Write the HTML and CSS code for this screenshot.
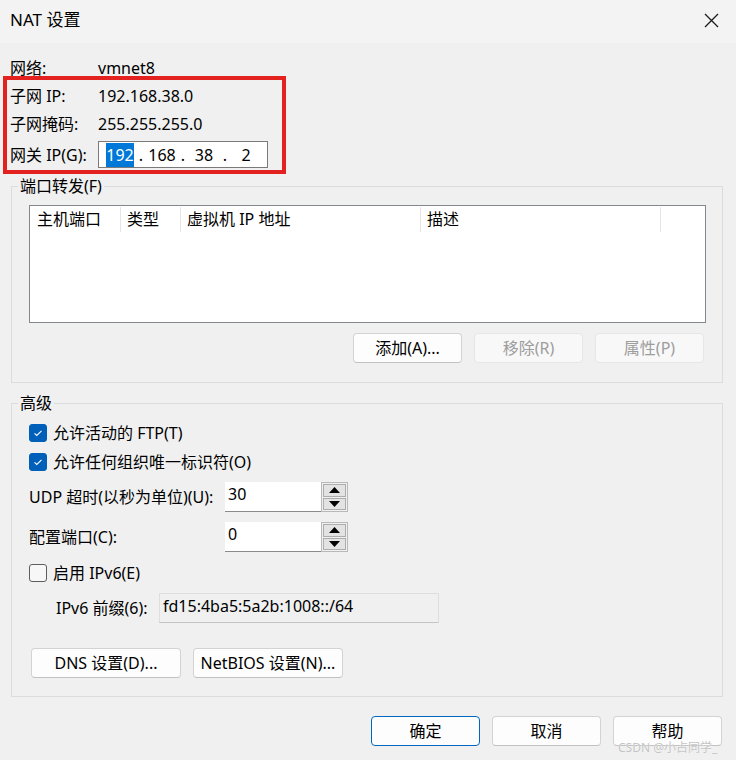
FILE: index.html
```html
<!DOCTYPE html>
<html lang="zh-CN">
<head>
<meta charset="utf-8">
<title>NAT 设置</title>
<link rel="stylesheet" href="styles.css">
</head>
<body>
<header class="titlebar">
  <span class="title">NAT 设置</span>
  <span class="close"><svg width="15" height="15" viewBox="0 0 15 15"><path d="M1 1 L14 14 M14 1 L1 14" stroke="#1b1b1b" stroke-width="1.3" fill="none"/></svg></span>
</header>

<div class="info">
  <div class="info-row"><span class="lbl">网络:</span><span>vmnet8</span></div>
  <div class="info-row"><span class="lbl">子网 IP:</span><span>192.168.38.0</span></div>
  <div class="info-row"><span class="lbl">子网掩码:</span><span>255.255.255.0</span></div>
  <div class="info-row gw"><span class="lbl">网关 IP(G):</span>
    <div class="ipbox">
      <span class="oct"><span class="sel">192</span></span><span class="dot">.</span>
      <span class="oct">168</span><span class="dot">.</span>
      <span class="oct">38</span><span class="dot">.</span>
      <span class="oct">2</span>
    </div>
  </div>
</div>

<fieldset class="group pf">
  <legend>端口转发(F)</legend>
  <div class="group-body">
    <div class="list">
      <div class="list-head">
        <div class="col c1">主机端口</div>
        <div class="col c2">类型</div>
        <div class="col c3">虚拟机 IP 地址</div>
        <div class="col c4">描述</div>
      </div>
    </div>
    <div class="btn-row">
      <div class="btn">添加(A)...</div>
      <div class="btn disabled">移除(R)</div>
      <div class="btn disabled">属性(P)</div>
    </div>
  </div>
</fieldset>

<fieldset class="group adv">
  <legend>高级</legend>
  <div class="group-body">
    <div class="chk-row first">
      <span class="cb checked"><svg width="18" height="18" viewBox="0 0 18 18"><path d="M5.5 9.3 L7.8 11.5 L12.5 6.8" stroke="#fff" stroke-width="1.1" fill="none"/></svg></span>
      <span>允许活动的 FTP(T)</span>
    </div>
    <div class="chk-row">
      <span class="cb checked"><svg width="18" height="18" viewBox="0 0 18 18"><path d="M5.5 9.3 L7.8 11.5 L12.5 6.8" stroke="#fff" stroke-width="1.1" fill="none"/></svg></span>
      <span>允许任何组织唯一标识符(O)</span>
    </div>
    <div class="spin-row">
      <span class="slbl">UDP 超时(以秒为单位)(U):</span>
      <div class="num">30</div>
      <div class="spinner">
        <div class="sbtn"><svg width="11" height="6" viewBox="0 0 11 6"><path d="M0 6 L5.5 0 L11 6 Z" fill="#000"/></svg></div>
        <div class="sbtn"><svg width="11" height="6" viewBox="0 0 11 6"><path d="M0 0 L11 0 L5.5 6 Z" fill="#000"/></svg></div>
      </div>
    </div>
    <div class="spin-row second">
      <span class="slbl">配置端口(C):</span>
      <div class="num">0</div>
      <div class="spinner">
        <div class="sbtn"><svg width="11" height="6" viewBox="0 0 11 6"><path d="M0 6 L5.5 0 L11 6 Z" fill="#000"/></svg></div>
        <div class="sbtn"><svg width="11" height="6" viewBox="0 0 11 6"><path d="M0 0 L11 0 L5.5 6 Z" fill="#000"/></svg></div>
      </div>
    </div>
    <div class="chk-row v6">
      <span class="cb"></span>
      <span>启用 IPv6(E)</span>
    </div>
    <div class="prefix-row">
      <span class="plbl">IPv6 前缀(6):</span>
      <div class="prefix">fd15:4ba5:5a2b:1008::/64</div>
    </div>
    <div class="dns-row">
      <div class="btn wide">DNS 设置(D)...</div>
      <div class="btn wide">NetBIOS 设置(N)...</div>
    </div>
  </div>
</fieldset>

<footer class="footer">
  <div class="btn primary">确定</div>
  <div class="btn">取消</div>
  <div class="btn">帮助</div>
</footer>

<div class="annot"></div>
<div class="watermark">CSDN @小占同学_</div>
</body>
</html>
```

FILE: styles.css
```css
* { box-sizing: border-box; }
html, body { margin: 0; padding: 0; }
body {
  width: 736px;
  height: 760px;
  overflow: hidden;
  position: relative;
  background: #f0f0f0;
  color: #000;
  font-family: "Noto Sans", "Noto Sans CJK SC", sans-serif;
  font-size: 16px;
  line-height: 20px;
}

.titlebar {
  height: 43px;
  background: #f3f3f3;
  display: flex;
  align-items: center;
  justify-content: space-between;
  padding: 0 17px 3px 10px;
}
.title { font-size: 17px; }
.close svg { display: block; }

.info { padding: 11px 0 0 10px; }
.info-row { display: flex; align-items: center; height: 28px; }
.lbl { width: 88px; }
.info-row.gw { height: 27px; margin-top: 3px; }
.ipbox {
  width: 170px;
  height: 27px;
  background: #fff;
  border: 1px solid #7a7a7a;
  display: flex;
  align-items: center;
  padding-left: 4px;
}
.oct { width: 34px; text-align: center; }
.dot { width: 8px; text-align: center; }
.sel { background: #0078d7; color: #fff; padding: 1px 0; }

.group {
  margin: 8px 13px 0 11px;
  padding: 9px 16px 19px 6px;
  border: 1px solid #dcdcdc;
  min-width: 0;
}
.group legend {
  padding: 0 2px;
  line-height: 20px;
  font-size: 16px;
}
.group.adv { margin-top: 10px; padding-top: 5px; padding-bottom: 18px; }
.group-body { padding-left: 11px; }

.list {
  height: 118px;
  background: #fff;
  border: 1px solid #828790;
}
.list-head { display: flex; padding-top: 1px; }
.col {
  height: 25px;
  line-height: 25px;
  border-right: 1px solid #e5e5e5;
  padding-left: 6px;
  white-space: nowrap;
}
.c1 { width: 91px; padding-left: 7px; }
.c2 { width: 60px; }
.c3 { width: 240px; }
.c4 { width: 240px; }

.btn-row {
  display: flex;
  justify-content: flex-end;
  gap: 12px;
  margin-top: 10px;
  padding-right: 2px;
}
.btn {
  width: 109px;
  height: 30px;
  display: flex;
  align-items: center;
  justify-content: center;
  background: #fdfdfd;
  border: 1px solid #d3d3d3;
  border-bottom-color: #c2c2c2;
  border-radius: 4px;
  white-space: nowrap;
}
.btn.disabled {
  background: #f8f8f8;
  border-color: #e6e6e6;
  color: #9d9d9d;
}
.btn.primary { border-color: #0067c0; }
.btn.wide { width: 150px; }

.chk-row { display: flex; align-items: center; gap: 6px; height: 29px; }
.chk-row.v6 { margin-top: 6px; }
.cb {
  width: 18px;
  height: 18px;
  border-radius: 3px;
  border: 1px solid #5d5d5d;
  background: #f7f7f7;
  flex: none;
}
.cb.checked { background: #005fb8; border-color: #005fb8; }
.cb svg { display: block; margin: -1px; }

.spin-row { display: flex; align-items: center; height: 30px; margin-top: 6px; }
.spin-row.second { margin-top: 10px; }
.slbl { width: 196px; white-space: nowrap; }
.num {
  width: 96px;
  height: 30px;
  background: #fff;
  border-bottom: 1px solid #8a8a8a;
  padding: 1px 0 0 3px;
  line-height: 22px;
}
.spinner {
  width: 27px;
  height: 30px;
  border: 1px solid #b9b9b9;
  padding: 1px;
  display: flex;
  flex-direction: column;
  gap: 1px;
}
.sbtn {
  flex: 1;
  background: #e3e3e3;
  border: 1px solid #adadad;
  display: flex;
  align-items: center;
  justify-content: center;
}
.sbtn svg { display: block; }

.prefix-row { display: flex; align-items: center; height: 30px; margin-top: 6px; padding-left: 27px; }
.plbl { width: 103px; white-space: nowrap; }
.prefix {
  width: 280px;
  height: 30px;
  background: #f0f0f0;
  border: 1px solid #dedede;
  border-bottom-color: #c4c4c4;
  padding: 1px 0 0 3px;
  line-height: 22px;
}

.dns-row { display: flex; gap: 12px; margin-top: 25px; padding-left: 2px; }

.footer {
  display: flex;
  justify-content: flex-end;
  gap: 12px;
  margin-top: 19px;
  padding-right: 14px;
}

.annot {
  position: absolute;
  left: 3px;
  top: 76px;
  width: 283px;
  height: 98px;
  border: 4px solid #e3211f;
}
.watermark {
  position: absolute;
  left: 618px;
  top: 742px;
  font-size: 12px;
  line-height: 12px;
  color: #c4c4c4;
  text-shadow: 0 0 1px #fff;
  white-space: nowrap;
}
```
